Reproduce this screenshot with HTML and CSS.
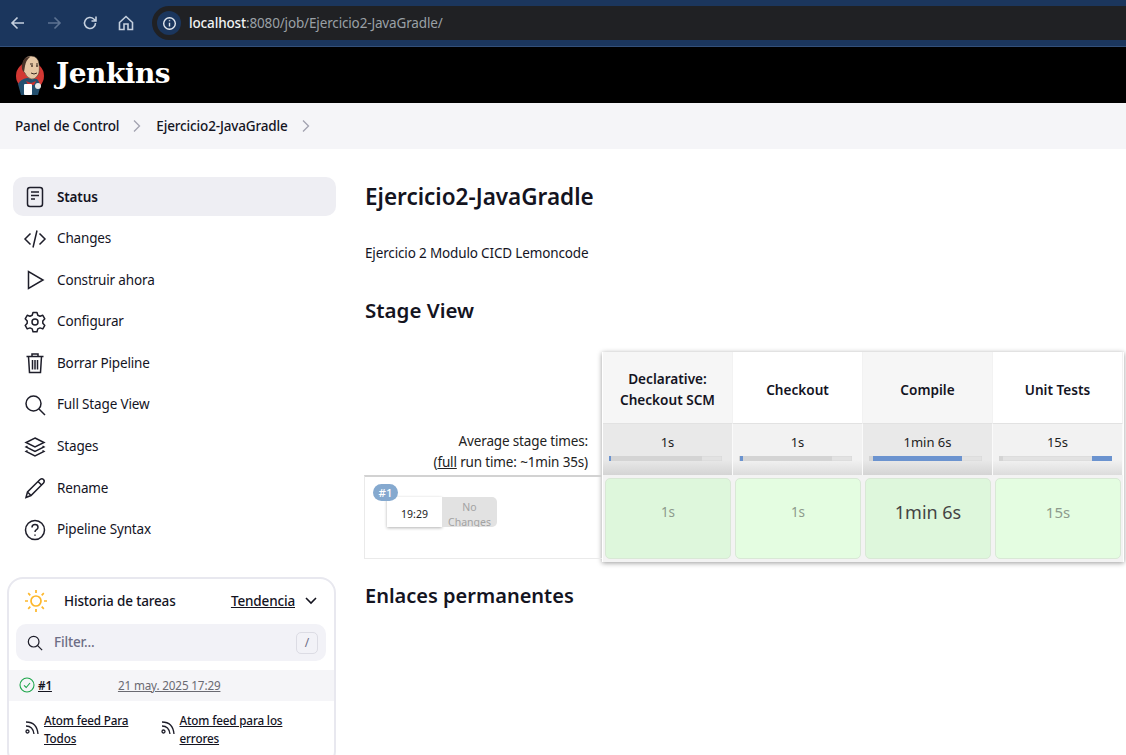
FILE: index.html
```html
<!DOCTYPE html>
<html lang="es">
<head>
<meta charset="utf-8">
<title>Ejercicio2-JavaGradle - Jenkins</title>
<link rel="stylesheet" href="styles.css">
</head>
<body>
<div class="browser">
  <svg class="nav-ic" viewBox="0 0 20 20"><path d="M16 10H4M9.5 4.5 4 10l5.500 5.500"/></svg>
  <svg class="nav-ic dim" viewBox="0 0 20 20"><path d="M4 10h12M10.500 4.500 16 10l-5.500 5.500"/></svg>
  <svg class="nav-ic" viewBox="0 0 20 20"><path d="M15.500 10a5.500 5.500 0 1 1-1.700-4L16 8M16 3.500V8h-4.500"/></svg>
  <svg class="nav-ic" viewBox="0 0 20 20"><path d="M3.500 9.500 10 3.500l6.500 6V16.500h-4.500V11H8v5.500H3.500z"/></svg>
  <div class="address">
    <span class="info"><svg viewBox="0 0 16 16"><circle cx="8" cy="8" r="6.200"/><path d="M8 7.200v4M8 4.400v1.300"/></svg></span>
    <span class="host">localhost</span><span class="url-rest">:8080/job/Ejercicio2-JavaGradle/</span>
  </div>
</div>
<header class="topbar">
  <svg class="logo" viewBox="0 0 30 40">
    <circle cx="15" cy="21" r="14" fill="#d33833"/>
    <path d="M6 40 3 29q3-5 9-6l10 1q3 3 3 9l-2 7z" fill="#24506f"/>
    <path d="M8 9q1-8 8-8t8 8q1 8-1 11-3 5-7 4-5-2-6-6-3-2-2-9z" fill="#e6c8a6" stroke="#3a2a22" stroke-width=".5"/>
    <path d="M7 9q-1 5 2 8l1-6q1-6 5-9-6-1-8 7z" fill="#4a3328"/>
    <path d="M15 9h3M21 9h2M16 18q3 2 6 0" stroke="#3a2a22" stroke-width="1"/>
    <circle cx="17" cy="11" r=".9" fill="#3a2a22"/><circle cx="22" cy="11" r=".9" fill="#3a2a22"/>
    <path d="m11 26 5 2 5-2-2 4h-6z" fill="#c9302c"/>
    <rect x="9" y="29" width="8" height="11" rx="1" fill="#fff"/>
    <circle cx="23" cy="31" r="3" fill="#e9e9e9"/>
  </svg>
  <span class="brand">Jenkins</span>
</header>
<nav class="crumbs">
  <span class="crumb">Panel de Control</span>
  <svg class="chev" viewBox="0 0 10 14"><path d="m2 1.500 5.500 5.500L2 12.500"/></svg>
  <span class="crumb">Ejercicio2-JavaGradle</span>
  <svg class="chev" viewBox="0 0 10 14"><path d="m2 1.500 5.500 5.500L2 12.500"/></svg>
</nav>
<div class="page">
  <aside class="side">
    <ul class="menu">
      <li class="item active"><svg class="ic" viewBox="0 0 24 24"><rect x="4.500" y="2.500" width="15" height="19" rx="2.500"/><path d="M8 7h8M8 10.500h8M8 14h4"/></svg>Status</li>
      <li class="item"><svg class="ic" viewBox="0 0 24 24"><path d="M7.500 6.500 2 12l5.500 5.500M16.500 6.500 22 12l-5.500 5.500M14 3.500 10 20.500"/></svg>Changes</li>
      <li class="item"><svg class="ic" viewBox="0 0 24 24"><path d="M5.500 3.500v17L20 12z"/></svg>Construir ahora</li>
      <li class="item"><svg class="ic" viewBox="0 0 24 24"><circle cx="12" cy="12" r="3"/><path d="M10 2.500h4l.8 2.800 2.200 1 2.800-1 2 3.500-2 2.200v2.200l2 2.200-2 3.500-2.800-1-2.200 1-.8 2.800h-4l-.8-2.800-2.200-1-2.800 1-2-3.500 2-2.200v-2.200l-2-2.200 2-3.500 2.800 1 2.200-1z" stroke-linejoin="round"/></svg>Configurar</li>
      <li class="item"><svg class="ic" viewBox="0 0 24 24"><path d="M3.500 5.500h17M9 5.500V3h6v2.500M5.500 5.500l1 16h11l1-16M9.500 9v9.500M12 9v9.500M14.500 9v9.500"/></svg>Borrar Pipeline</li>
      <li class="item"><svg class="ic" viewBox="0 0 24 24"><circle cx="10.500" cy="10.500" r="7.500"/><path d="m16 16 6 6"/></svg>Full Stage View</li>
      <li class="item"><svg class="ic" viewBox="0 0 24 24"><path d="m12 3 9 4.500-9 4.500-9-4.500zM4.500 11 3 12l9 4.500 9-4.500-1.500-1M4.500 15.500 3 16.500 12 21l9-4.500-1.500-1"/></svg>Stages</li>
      <li class="item"><svg class="ic" viewBox="0 0 24 24"><path d="M3 21.500l1.500-5.500L17 3.500q2-1.500 3.500 0t0 3.500L8 19.500zM15 5.500 18.500 9M4.500 16l3.500 3.500"/></svg>Rename</li>
      <li class="item"><svg class="ic" viewBox="0 0 24 24"><circle cx="12" cy="12" r="9.500"/><path d="M9 9.500q0-3 3-3t3 2.700q0 1.600-1.500 2.500T12 14M12 16.500v1.200"/></svg>Pipeline Syntax</li>
    </ul>
    <section class="card">
      <div class="card-head">
        <svg class="sun" viewBox="0 0 24 24"><circle cx="12" cy="12" r="5"/><path d="M12 1v3M12 20v3M1 12h3M20 12h3M4.200 4.200l2.100 2.100M17.700 17.700l2.100 2.100M4.200 19.800l2.100-2.100M17.700 6.300l2.100-2.100"/></svg>
        <span class="card-title">Historia de tareas</span>
        <a class="trend">Tendencia</a>
        <svg class="down" viewBox="0 0 14 10"><path d="m2 2 5 5 5-5"/></svg>
      </div>
      <div class="filter">
        <svg class="search" viewBox="0 0 18 18"><circle cx="7.500" cy="7.500" r="6"/><path d="m12 12 5 5"/></svg>
        <span class="filter-text">Filter...</span>
        <span class="slash">/</span>
      </div>
      <div class="build">
        <svg class="ok" viewBox="0 0 16 16"><circle cx="8" cy="8" r="7"/><path d="m5 8.300 2.200 2.200L11 6"/></svg>
        <a class="build-no">#1</a>
        <a class="build-date">21 may. 2025 17:29</a>
      </div>
      <div class="feeds">
        <div class="feed"><svg class="rss" viewBox="0 0 14 14"><circle cx="2.500" cy="11.500" r="1.500"/><path d="M1 6q7 0 8 8M1 2q11 0 12 12"/></svg><a>Atom feed Para Todos</a></div>
        <div class="feed"><svg class="rss" viewBox="0 0 14 14"><circle cx="2.500" cy="11.500" r="1.500"/><path d="M1 6q7 0 8 8M1 2q11 0 12 12"/></svg><a>Atom feed para los errores</a></div>
      </div>
    </section>
  </aside>
  <main class="main">
    <h1 class="title">Ejercicio2-JavaGradle</h1>
    <p class="desc">Ejercicio 2 Modulo CICD Lemoncode</p>
    <h2 class="h-stage">Stage View</h2>
    <div class="stage">
      <div class="stage-left">
        <div class="avg-label">Average stage times:<br>(<a>full</a> run time: ~1min 35s)</div>
        <div class="run">
          <span class="badge">#1</span>
          <div class="run-box">
            <div class="run-date">19:29</div>
            <div class="run-chg">No Changes</div>
          </div>
        </div>
      </div>
      <div class="stage-table">
        <div class="th shade">Declarative:<br>Checkout SCM</div>
        <div class="th">Checkout</div>
        <div class="th shade">Compile</div>
        <div class="th">Unit Tests</div>
        <div class="avg shade"><span>1s</span><div class="bar"><i class="fill" style="width:2px"></i><i class="seg" style="width:91px"></i></div></div>
        <div class="avg"><span>1s</span><div class="bar"><i class="seg" style="width:1px"></i><i class="fill" style="width:3px"></i><i class="seg" style="width:89px"></i></div></div>
        <div class="avg shade"><span>1min 6s</span><div class="bar"><i class="seg" style="width:4px"></i><i class="fill" style="width:89px"></i></div></div>
        <div class="avg"><span>15s</span><div class="bar"><i class="seg" style="width:4px"></i><i class="gap" style="width:89px"></i><i class="fill" style="width:20px"></i></div></div>
        <div class="cell"><div class="box shade-g">1s</div></div>
        <div class="cell"><div class="box">1s</div></div>
        <div class="cell"><div class="box shade-g big">1min 6s</div></div>
        <div class="cell"><div class="box mid">15s</div></div>
      </div>
    </div>
    <h2 class="h-links">Enlaces permanentes</h2>
  </main>
</div>
</body>
</html>
```
FILE: styles.css
```css
* { box-sizing: border-box; }
html, body { height: 755px; overflow: hidden; }
body { margin: 0; background: #fff; color: #14141f; font: 13.500px/21px "Noto Sans", "Open Sans", sans-serif; letter-spacing: -.15px; }
a { color: inherit; text-decoration: underline; }
svg { fill: none; flex: none; }

.browser { height: 47px; background: #1b365d; border-bottom: 1px solid #33507a; display: flex; align-items: center; padding: 0 0 0 8px; gap: 16px; }
.nav-ic { width: 20px; height: 20px; stroke: #c5d0de; stroke-width: 1.600; }
.nav-ic.dim { stroke: #5d7392; }
.address { flex: 1; margin: -1px 0 0 0; height: 34px; padding-top: 1px; background: #202124; border-radius: 17px 0 0 17px; display: flex; align-items: center; padding-left: 3px; }
.info { width: 24px; height: 24px; border-radius: 50%; background: #1b365d; display: flex; align-items: center; justify-content: center; margin-right: 8px; margin-left: 2px; }
.info svg { width: 15px; height: 15px; stroke: #e3e8ef; stroke-width: 1.500; }
.host { color: #f1f3f4; font-weight: 500; }
.url-rest { color: #9aa0a6; }

.topbar { height: 56px; background: #000; display: flex; align-items: center; padding-left: 15px; }
.logo { width: 30px; height: 40px; }
.brand { margin: 0 0 3px 11px; color: #fff; font: bold 28px "DejaVu Serif", serif; letter-spacing: -.5px; }

.crumbs { height: 46px; background: #f5f5f8; display: flex; align-items: center; padding-left: 15px; font-weight: 500; color: #14141f; }
.chev { width: 10px; height: 14px; margin: 0 14px 0 13px; stroke: #a2a2b0; stroke-width: 1.300; }

.page { display: flex; }
.side { width: 350px; flex: none; padding: 28px 14px 0 7px; }
.menu { list-style: none; margin: 0; padding: 0 0 0 6px; display: flex; flex-direction: column; gap: 2.600px; }
.item { height: 39px; border-radius: 10px; display: flex; align-items: center; padding: 1px 0 0 10px; color: #14141f; }
.item.active { background: #eeeef3; font-weight: 600; }
.ic { width: 24px; height: 24px; margin-right: 10px; stroke: #1e1e2a; stroke-width: 1.500; }

.card { margin-top: 28px; width: 329px; height: 190px; border: 2px solid #e8e8ef; border-radius: 16px; background: #fff; }
.card-head { height: 45px; display: flex; align-items: center; padding: 0 16px 0 15px; font-weight: 500; }
.sun { width: 24px; height: 24px; stroke: #fdb72b; stroke-width: 1.700; }
.card-title { margin-left: 16px; flex: 1; }
.trend { font-weight: 500; }
.down { width: 14px; height: 10px; margin-left: 9px; stroke: #14141f; stroke-width: 1.600; }
.filter { margin: 0 8px 0 7px; height: 37px; padding-top: 1px; border-radius: 10px; background: #f2f2f7; display: flex; align-items: center; padding-left: 11px; padding-right: 8px; }
.search { width: 16px; height: 16px; stroke: #1e1e2a; stroke-width: 1.400; }
.filter-text { margin-left: 11px; flex: 1; color: #6d6d85; font-weight: 500; }
.slash { width: 22px; height: 22px; border: 1px solid #dcdce4; border-radius: 5px; text-align: center; line-height: 20px; font-size: 12px; color: #6d6d85; }
.build { margin-top: 9px; height: 31px; background: #f5f5f8; display: flex; align-items: center; padding-left: 10px; font-size: 11.700px; }
.ok { width: 16px; height: 16px; stroke: #1ea64b; stroke-width: 1.100; }
.build-no { margin-left: 3px; font-weight: 600; }
.build-date { margin-left: 66px; color: #6a6a72; }
.feeds { display: flex; padding: 10px 0 0 16px; font-size: 11.700px; line-height: 18px; font-weight: 500; }
.feed { width: 135.500px; display: flex; padding-right: 6px; }
.rss { width: 14px; height: 14px; margin: 9px 5px 0 0; stroke: #1e1e2a; stroke-width: 1.300; }

.main { flex: 1; padding: 0 0 0 14px; min-width: 0; }
.title { margin: 33px 0 0; padding-left: 1px; font-size: 22.500px; line-height: 30px; font-weight: 600; letter-spacing: 0; }
.desc { margin: 31px 0 0; padding-left: 1px; }
.h-stage { margin: 33px 0 0; padding-left: 1px; font-size: 20.500px; line-height: 27px; font-weight: 600; letter-spacing: 0; }
.stage { margin-top: 28px; display: flex; }
.stage-left { width: 238px; flex: none; padding-top: 79px; }
.avg-label { height: 45px; padding-right: 14px; text-align: right; line-height: 21px; color: #222; }
.run { position: relative; height: 84px; margin-top: -1px; border: 1px solid #eaeaea; border-top: 2px solid #d2d2d2; border-right: 0; padding: 20px 0 0 22px; font-size: 10.500px; letter-spacing: 0; }
.badge { position: absolute; left: 8px; top: 7px; width: 25px; height: 17px; border-radius: 9px; background: #85a9cf; color: #fff; text-align: center; font-size: 11.500px; line-height: 17px; font-weight: 500; z-index: 1; }
.run-box { display: flex; width: 110px; height: 30px; }
.run-date { width: 55px; background: #fff; box-shadow: 0 1px 3px rgba(0,0,0,.3); text-align: center; padding-top: 7px; line-height: 21px; color: #222; }
.run-chg { width: 55px; height: 30px; overflow: hidden; background: #e2e2e2; border-radius: 0 5px 5px 0; color: #a3a3a3; text-align: center; line-height: 15px; padding-top: 3px; }

.stage-table { display: grid; grid-template-columns: repeat(4, 130px); grid-template-rows: 71px 52px 87px; box-shadow: 0 1px 5px rgba(0,0,0,.4); width: 522px; padding-left: 1px; background: #fff; letter-spacing: 0; }
.th { display: flex; align-items: center; justify-content: center; text-align: center; font-weight: 600; font-size: 13.600px; line-height: 21px; color: #14141f; background: #fff; border-right: 1px solid #f2f2f2; padding-top: 3px; }
.th.shade { background: #f6f6f6; }
.avg { background: linear-gradient(#f2f2f2 70%, #dcdcdc); border-top: 1px solid #e2e2e2; border-right: 1px solid #fafafa; text-align: center; padding-top: 8px; color: #222; line-height: 21px; font-size: 13px; }
.avg.shade { background: linear-gradient(#e9e9e9 70%, #d4d4d4); }
.avg span { display: block; height: 23px; }
.bar { width: 113px; height: 5px; margin: 1px 0 0 6px; background: #e2e2e2; box-shadow: inset 0 0 1px #bbb; display: flex; }
.fill { display: block; height: 5px; background: #6b93cf; }
.seg { display: block; height: 5px; background: #d4d4d4; }
.gap { display: block; height: 5px; }
.cell { padding: 3px 2px; background: #f3f3f3; }
.box { height: 81px; background: #e4fde1; border: 1px solid #d9e8d6; border-radius: 5px; text-align: center; color: #8d9a8c; padding-top: 23px; }
.box.shade-g { background: #def7dc; }
.box.big { font-size: 18px; color: #444; }
.box.mid { font-size: 15px; }

.h-links { margin: 20px 0 0; padding-left: 1px; font-size: 20px; line-height: 27px; font-weight: 600; letter-spacing: 0; }
```
